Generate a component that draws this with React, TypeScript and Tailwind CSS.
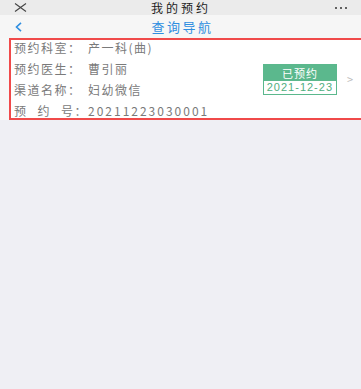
import React from "react";

const rows = [
    { label: "预约科室", value: "产一科(曲)" },
    { label: "预约医生", value: "曹引丽" },
    { label: "渠道名称", value: "妇幼微信" },
];

export default function App() {
    return (
        <div
            className="h-[389px] w-[361px] overflow-hidden bg-[#efeff4]"
            style={{ fontFamily: '"Noto Sans CJK SC", "Noto Sans", sans-serif' }}
        >
            {/* ── Title bar ── */}
            <div className="flex h-[15px] items-center justify-between bg-[#ebebeb] px-[14px] text-[#333]">
                <svg width="13" height="9" viewBox="0 0 13 9">
                    <path d="M1 0.5 L12 8.5 M12 0.5 L1 8.5" stroke="#444" strokeWidth="1.1" />
                </svg>
                <span className="text-[12px] leading-[15px] tracking-[3px] text-[#222]">我的预约</span>
                <span className="flex gap-[3px]">
                    <span className="h-[2px] w-[2px] rounded-full bg-[#333]" />
                    <span className="h-[2px] w-[2px] rounded-full bg-[#333]" />
                    <span className="h-[2px] w-[2px] rounded-full bg-[#333]" />
                </span>
            </div>

            {/* ── Nav bar ── */}
            <div className="relative flex h-[23px] items-center justify-center bg-[#f6f6f6]">
                <svg className="absolute left-[15px] top-[7px]" width="7" height="10" viewBox="0 0 7 10">
                    <path d="M6 0.8 L1.5 5 L6 9.2" fill="none" stroke="#2f8ee0" strokeWidth="1.6" />
                </svg>
                <span className="ml-[4px] text-[13px] leading-none tracking-[2.5px] text-[#2f8ee0]">查询导航</span>
            </div>

            {/* ── Appointment card ── */}
            <div className="bg-[#f7f7f7] pl-[9px]">
                <div className="flex h-[82px] items-center border-y-2 border-l-2 border-[#f04a4a] bg-white">
                    <div className="flex flex-1 flex-col gap-[7px] pl-[3px] text-[12px] leading-[14px] tracking-[1.5px] text-[#7a7a7a]">
                        {rows.map((r) => (
                            <div key={r.label} className="flex">
                                <span className="w-[74px]">{r.label}：</span>
                                <span>{r.value}</span>
                            </div>
                        ))}
                        <div className="flex">
                            <span className="flex w-[74px]">
                                <span className="flex w-[61px] justify-between">
                                    <span>预</span>
                                    <span>约</span>
                                    <span>号</span>
                                </span>
                                ：
                            </span>
                            <span className="tracking-[2px]">20211223030001</span>
                        </div>
                    </div>

                    <div className="mr-[10px] flex w-[74px] flex-col overflow-hidden border border-[#5bb88d]">
                        <div className="flex h-[16px] items-center justify-center bg-[#5bb88d] text-[11px] leading-[16px] tracking-[1px] text-white">
                            已预约
                        </div>
                        <div
                            className="flex h-[13px] items-center justify-center bg-white text-[11px] leading-[13px] tracking-[1px] text-[#4fae80]"
                            style={{ fontFamily: '"Liberation Sans", Arial, sans-serif' }}
                        >
                            2021-12-23
                        </div>
                    </div>
                    <span className="mr-[8px] text-[11px] leading-none text-[#bbb]">&gt;</span>
                </div>
            </div>
        </div>
    );
}
